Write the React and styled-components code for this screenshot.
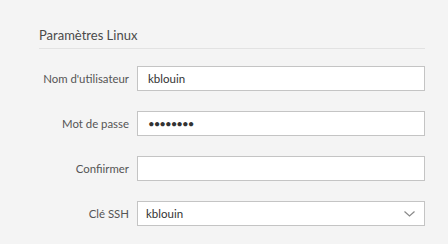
import React from "react";
import styled, { createGlobalStyle } from "styled-components";

const Global = createGlobalStyle`
  html, body { margin: 0; padding: 0; background: #f4f4f4; }
  body { font-family: Lato, "Open Sans", sans-serif; }
`;

const Section = styled.section`
  width: 386px;
  padding: 27px 23px 0 39px;
`;

const Heading = styled.h2`
  margin: 0;
  font-size: 13px;
  font-weight: 400;
  line-height: 17px;
  color: #4a4a4a;
  padding-bottom: 4px;
  border-bottom: 1px solid #e2e2e2;
`;

const Form = styled.div`
  display: grid;
  grid-template-columns: 90px 1fr;
  column-gap: 8px;
  row-gap: 20px;
  margin-top: 17px;
  align-items: center;
`;

const Label = styled.label`
  text-align: right;
  font-size: 11.4px;
  color: #555;
  white-space: nowrap;
`;

const Field = styled.div`
  position: relative;
  height: 25px;
  box-sizing: border-box;
  border: 1px solid #c4c4c4;
  background: #fff;
  display: flex;
  align-items: center;
`;

const Input = styled.input`
  border: none;
  outline: none;
  background: transparent;
  width: 100%;
  height: 100%;
  box-sizing: border-box;
  padding: 0 0 0 ${(p) => p.$pad || 10}px;
  font-family: Lato, "Open Sans", sans-serif;
  font-size: 11.5px;
  color: #333;
  letter-spacing: ${(p) => (p.type === "password" ? "-1px" : "0")};
`;

const Chevron = styled.svg`
  position: absolute;
  right: 9px;
  top: 50%;
  margin-top: -3px;
`;

export default function App() {
  return (
    <>
      <Global />
      <Section>
        <Heading>Paramètres Linux</Heading>
        <Form>
          <Label>Nom d'utilisateur</Label>
          <Field>
            <Input readOnly value="kblouin" />
          </Field>
          <Label>Mot de passe</Label>
          <Field>
            <Input readOnly type="password" value="12345678" />
          </Field>
          <Label>Confiirmer</Label>
          <Field>
            <Input readOnly value="" />
          </Field>
          <Label>Clé SSH</Label>
          <Field>
            <Input readOnly value="kblouin" $pad={8} />
            <Chevron width="11" height="6" viewBox="0 0 11 6">
              <path d="M0.5 0.5 L5.5 5 L10.5 0.5" fill="none" stroke="#8a8a8a" strokeWidth="1.2" />
            </Chevron>
          </Field>
        </Form>
      </Section>
    </>
  );
}
